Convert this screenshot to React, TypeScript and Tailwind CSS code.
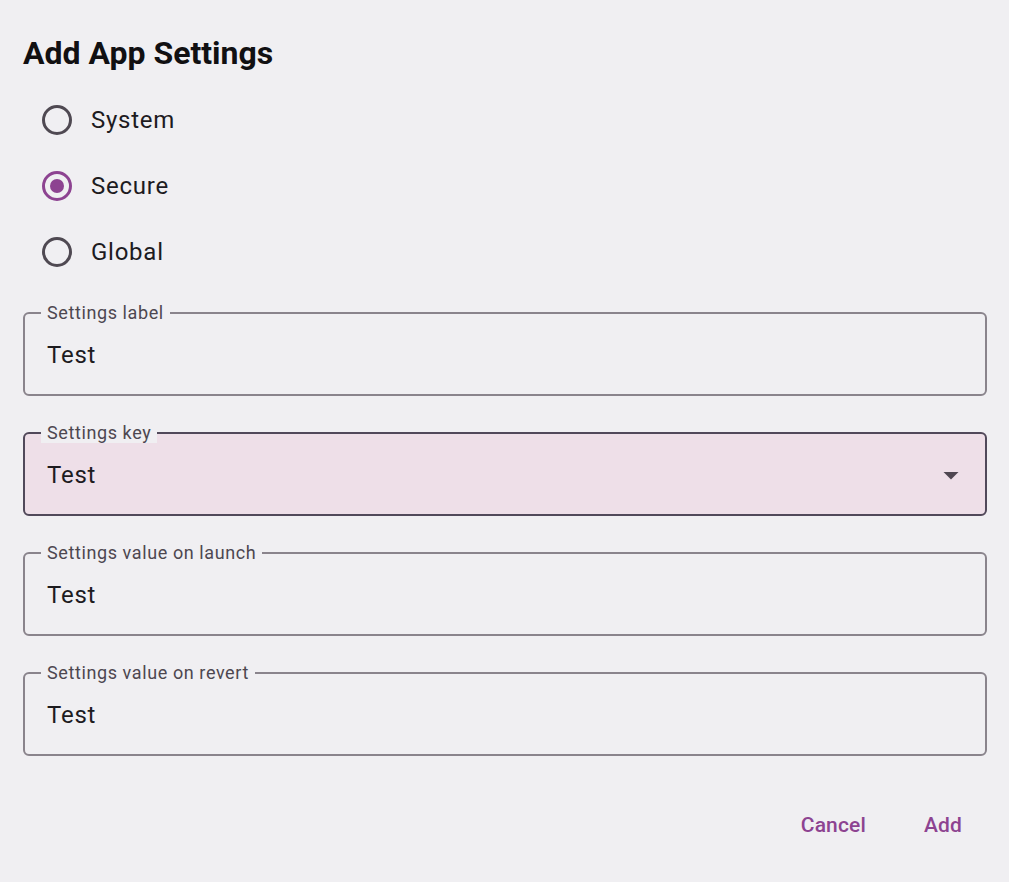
import React, { useState } from 'react';

const font = { fontFamily: 'Roboto, "Noto Sans", sans-serif' };

type Scope = 'System' | 'Secure' | 'Global';

const Radio: React.FC<{ label: Scope; checked: boolean; onSelect: () => void }> = ({ label, checked, onSelect }) => (
  <button type="button" onClick={onSelect} className="flex h-[66px] items-center pl-[19px] text-left">
    <span
      className={`flex h-[30px] w-[30px] items-center justify-center rounded-full border-[3px] ${
        checked ? 'border-[#8d4391]' : 'border-[#4f4952]'
      }`}
    >
      {checked && <span className="h-[14px] w-[14px] rounded-full bg-[#8d4391]" />}
    </span>
    <span className="ml-[19px] text-[24px] leading-[28px] tracking-[0.75px] text-[#1d1b1f]">{label}</span>
  </button>
);

interface FieldProps {
  label: string;
  value: string;
  dropdown?: boolean;
}

const OutlinedField: React.FC<FieldProps> = ({ label, value, dropdown }) => (
  <fieldset
    className={`mx-0 rounded-[6px] border-2 px-0 ${
      dropdown ? 'border-[#51495a] bg-[#eedfe8]' : 'border-[#8a848c] bg-transparent'
    }`}
  >
    <legend className="ml-[16px] bg-[#f0eff2] px-[6px] text-[18px] leading-[20px] tracking-[0.6px] text-[#4d4750]">
      {label}
    </legend>
    <div className="flex h-[71px] items-center pb-[8px] pl-[22px] pr-[16px]">
      <span className="flex-1 text-[24px] leading-[28px] tracking-[0.75px] text-[#1d1b1f]">{value}</span>
      {dropdown && (
        <svg width="36" height="36" viewBox="0 0 24 24" className="text-[#4f4751]">
          <path d="M7 10l5 5 5-5z" fill="currentColor" />
        </svg>
      )}
    </div>
  </fieldset>
);

export default function App() {
  const [scope, setScope] = useState<Scope>('Secure');
  const scopes: Scope[] = ['System', 'Secure', 'Global'];

  return (
    <div style={font} className="min-h-screen bg-[#f0eff2] px-[23px] pr-[22px] pt-[34px]">
      <h1 className="text-[32px] font-bold leading-[38px] text-[#111012]">Add App Settings</h1>

      <div className="mt-[15px] flex flex-col">
        {scopes.map(s => (
          <Radio key={s} label={s} checked={scope === s} onSelect={() => setScope(s)} />
        ))}
      </div>

      <div className="mt-[18px] flex flex-col gap-[27px]">
        <OutlinedField label="Settings label" value="Test" />
        <OutlinedField label="Settings key" value="Test" dropdown />
        <OutlinedField label="Settings value on launch" value="Test" />
        <OutlinedField label="Settings value on revert" value="Test" />
      </div>

      <div className="mr-[7px] mt-[40px] flex justify-end gap-[22px]">
        <button type="button" className="h-[60px] px-[18px] text-[21px] font-medium tracking-[0.15px] text-[#8d4391]">
          Cancel
        </button>
        <button type="button" className="h-[60px] px-[18px] text-[21px] font-medium tracking-[0.15px] text-[#8d4391]">
          Add
        </button>
      </div>
    </div>
  );
}
